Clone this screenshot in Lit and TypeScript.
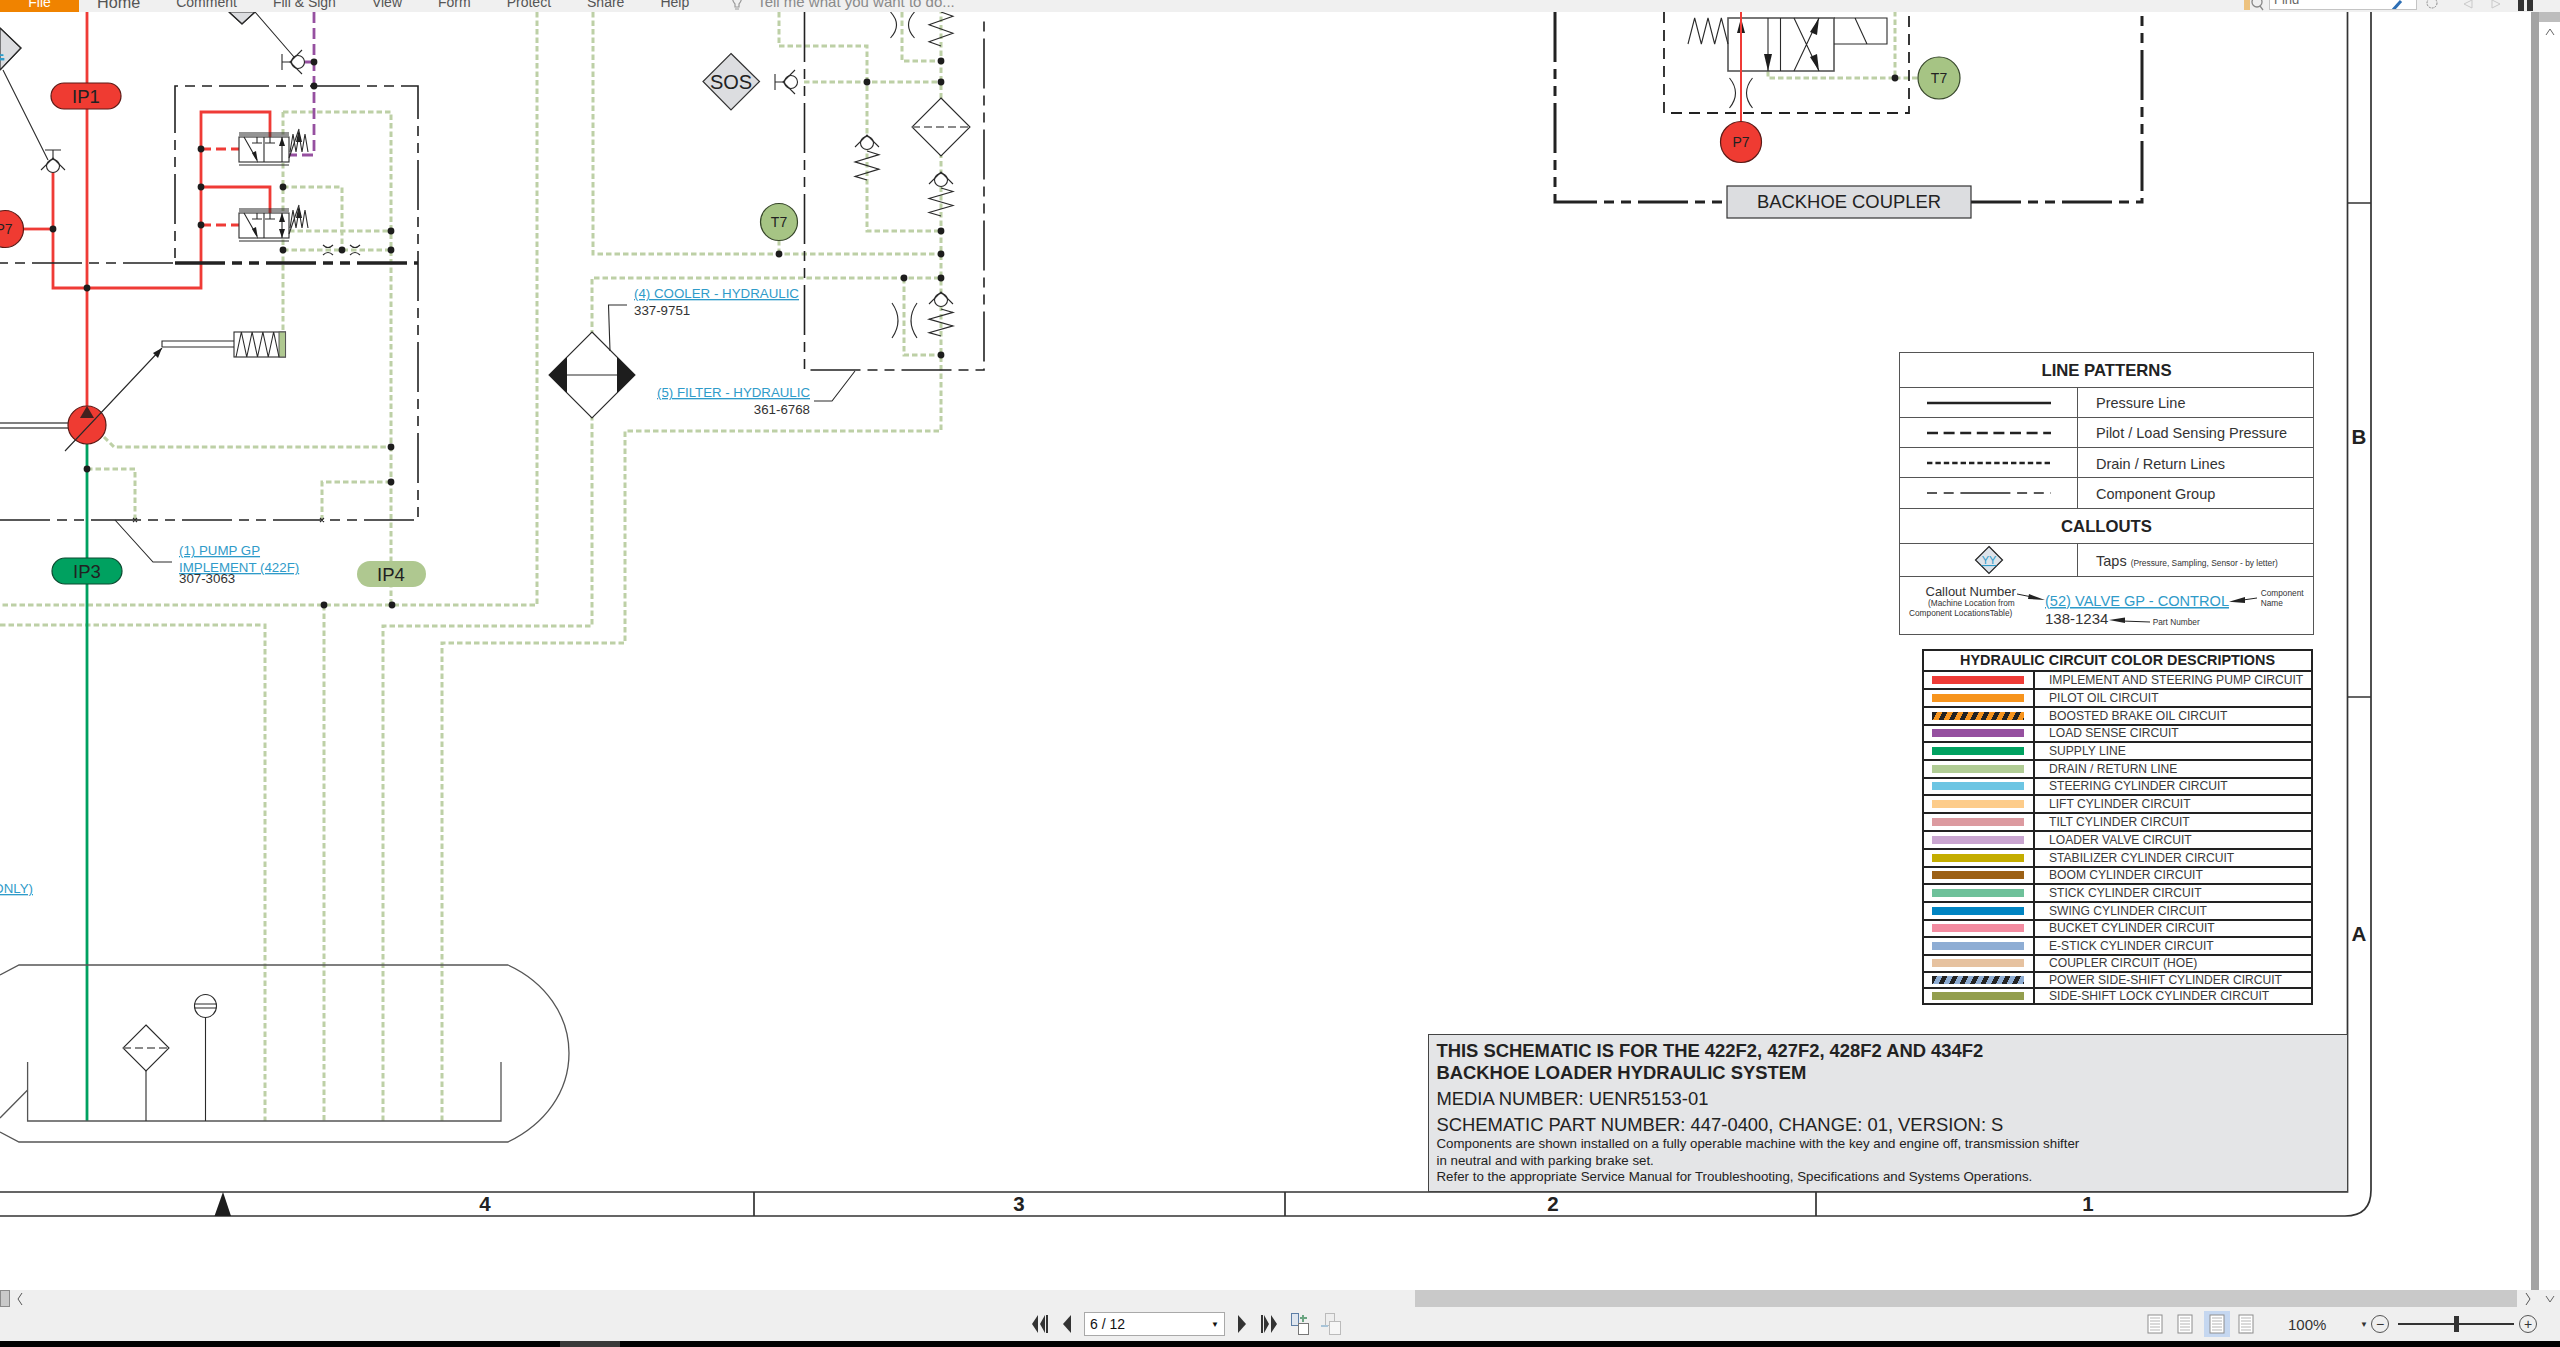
import { css, html, svg, LitElement } from "lit";
import { customElement } from "lit/decorators.js";

type Pt = [number, number];

const pts = (p: Pt[]) => p.map((q) => q.join(",")).join(" ");

// return lines, all in page coordinates
const DRAINS: Pt[][] = [
    [[283, 112], [391, 112], [391, 605]],
    [[283, 112], [283, 332]],
    [[283, 187], [342, 187], [342, 250]],
    [[289, 231], [391, 231]],
    [[283, 250], [391, 250]],
    [[537, 12], [537, 605], [0, 605]],
    [[593, 12], [593, 254], [941, 254]],
    [[383, 1121], [383, 626], [592, 626], [592, 278], [941, 278]],
    [[0, 625], [265, 625], [265, 1121]],
    [[324, 605], [324, 1121]],
    [[442, 1121], [442, 643], [625, 643], [625, 431], [941, 431], [941, 12]],
    [[779, 12], [779, 46], [867, 46], [867, 231], [941, 231]],
    [[779, 240], [779, 254]],
    [[804, 82], [941, 82]],
    [[902, 12], [902, 61], [941, 61]],
    [[904, 278], [904, 355], [941, 355]],
    [[87, 469], [135, 469], [135, 520]],
    [[391, 482], [322, 482], [322, 520]],
    [[104, 437], [114, 447], [391, 447]],
    [[1768, 71], [1768, 78], [1895, 78], [1895, 12]],
    [[1895, 78], [1918, 78]],
];

const DOTS: Pt[] = [
    [314, 62], [314, 86], [53, 229], [87, 288], [201, 149], [201, 187], [201, 225],
    [283, 187], [283, 250], [391, 231], [391, 250], [342, 250], [391, 447], [391, 482],
    [87, 469], [324, 605], [392, 605], [779, 254], [867, 82], [941, 82], [941, 61],
    [941, 231], [941, 254], [941, 278], [941, 355], [904, 278], [1895, 78],
];

const spring = (x: number, y0: number, y1: number, w: number, n: number) => {
    const step = (y1 - y0) / n;
    const p: Pt[] = [[x, y0]];
    for (let i = 0; i < n; i++) p.push([i % 2 ? x - w : x + w, y0 + step * (i + 0.5)]);
    p.push([x, y1]);
    return svg`<polyline class="thin" points=${pts(p)} />`;
};

const hspring = (x0: number, x1: number, y0: number, y1: number, n: number) => {
    const step = (x1 - x0) / n;
    const p: Pt[] = [];
    for (let i = 0; i <= n; i++) p.push([x0 + step * i, i % 2 ? y0 : y1]);
    return svg`<polyline class="thin" points=${pts(p)} />`;
};

const check = (x: number, y: number, rot: number, capped: boolean) => svg`
    <g transform="translate(${x} ${y}) rotate(${rot})">
        <circle class="thin blank" r="6.5" />
        <polyline class="thin" points="-12,4 0,-8 12,4" />
        ${capped ? svg`<path class="thin" d="M0 -8V-16M-8 -16H8" />` : ""}
    </g>
`;

const valve = (y: number) => svg`
    <g transform="translate(0 ${y})">
        <path class="thin" d="M239 133H289M239 135H289M239 165H289" />
        <rect class="thin blank" x="239" y="137" width="50" height="25" />
        <path class="thin" d="M264 137V162M257 137V143M252 143H262M270 137V143M265 143H275M282 137V162M244 137L257 160" />
        <polygon class="ink" points="258,163 252,153 256,151" />
        <polygon class="ink" points="282,137 279,146 285,146" />
        ${y ? svg`<polygon class="ink" points="282,162 279,153 285,153" />` : ""}
        <polygon class="ink" points="299,129 296,142 302,142" />
        <path class="thin" d="M289 158L299 129" />
        ${hspring(290, 308, 134, 152, 6)}
    </g>
`;

const orifice = (x: number, y0: number, y1: number, gap: number) => svg`
    <path class="thin" d="M${x - gap - 6} ${y0}Q${x - gap + 6} ${(y0 + y1) / 2} ${x - gap - 6} ${y1}" />
    <path class="thin" d="M${x + gap + 6} ${y0}Q${x + gap - 6} ${(y0 + y1) / 2} ${x + gap + 6} ${y1}" />
`;

const BAR = (pts0: Pt, t: string, cls: string) => svg`<text class=${cls} x=${pts0[0]} y=${pts0[1]}>${t}</text>`;

const schematic = () => svg`
    <svg class="drawing" viewBox="0 12 2531 1278" width="2531" height="1278">
        <path class="frame" d="M0 1192H2347.5V12M2371 12V1190Q2371 1216 2345 1216H0M2347 203H2371M2347 697H2371M754 1192V1216M1285 1192V1216M1816 1192V1216" />
        <polygon class="ink" points="223,1192 214.5,1216 231,1216" />
        ${BAR([485, 1211], "4", "sheet-no")}
        ${BAR([1019, 1211], "3", "sheet-no")}
        ${BAR([1553, 1211], "2", "sheet-no")}
        ${BAR([2088, 1211], "1", "sheet-no")}
        ${BAR([2359, 444], "B", "sheet-no")}
        ${BAR([2359, 941], "A", "sheet-no")}

        ${DRAINS.map((d) => svg`<polyline class="drain" points=${pts(d)} />`)}

        <path class="red" d="M87 12V406M53 172V288H201V112H270V137M201 187H270V213" />
        <path class="red" d="M23 229H53" />
        <path class="red dashed" d="M201 149H239M201 225H239" />
        <path class="purple" d="M314 12V155H289M304 62H314" />
        <path class="green" d="M87 444V1121" />

        <path class="group" d="M0 520H418V86H175V263H0" />
        <path class="group heavy" d="M175 263H418" />
        <path class="group" d="M804.5 12V370H984V17" />
        <path class="group coupler" d="M1555 12V202H1727M1971 202H2142V12" />
        <path class="group inner" d="M1664 12V113H1909V12" />

        <polygon class="sand" points="229,12 242,24 255,12" />
        <path class="thin" d="M229 12L242 24L255 12L294 57" />
        <polygon class="sand" points="0,28 21,48 0,70" />
        <path class="thin" d="M0 28L21 48L0 70M3 70L48 160" />
        ${BAR([-9, 56], "1", "link big")}

        ${check(53, 166, 0, true)}
        ${check(298, 62, -90, true)}
        ${check(791, 82, -90, true)}

        ${valve(0)}
        ${valve(76)}
        <path class="thin" d="M323 245Q328 250 333 245M323 255Q328 250 333 255M350 245Q355 250 360 245M350 255Q355 250 360 255" />

        <rect class="pill-red" x="51" y="83" width="70" height="26" rx="13" />
        ${BAR([86, 103], "IP1", "tag")}
        <circle class="pill-red" cx="5" cy="229" r="18.5" />
        ${BAR([4, 234], "P7", "tag small")}

        <path class="pipe" d="M0 423H68M0 428H68" />
        <circle class="pill-red" cx="87" cy="425" r="19" />
        <polygon class="plum" points="87,406 80,418 94,418" />
        <path class="thin" d="M65 451L162 348M162 347V341H234M162 347H234" />
        <polygon class="ink" points="162,348 153,353 158,358" />
        <rect class="thin" x="234" y="332" width="51.5" height="25" />
        <rect class="end-green" x="279" y="332" width="6.5" height="25" />
        ${hspring(236, 279, 332, 357, 8)}

        <path class="thin" d="M133 518L137 522M137 518L133 522M320 518L324 522M324 518L320 522" />
        <path class="thin" d="M115 520L153 562H172" />
        <rect class="pill-green" x="52" y="558" width="70" height="26" rx="13" />
        ${BAR([87, 578], "IP3", "tag")}
        <rect class="pill-drain" x="357" y="561" width="69" height="26" rx="13" />
        ${BAR([391, 581], "IP4", "tag")}

        ${BAR([179, 555], "(1) PUMP GP", "link")}
        ${BAR([179, 572], "IMPLEMENT (422F)", "link")}
        ${BAR([179, 583], "307-3063", "part")}
        ${BAR([33, 893], "(ONLY)", "link flush-end")}

        <polygon class="sand" points="731,53.5 759.5,81.5 731,110 703,81.5" />
        ${BAR([731, 89], "SOS", "tag sos")}
        <circle class="pill-drain stroked" cx="779" cy="222" r="18.5" />
        ${BAR([779, 227], "T7", "tag small")}

        <polygon class="thin blank" points="941,98 970,127 941,156 912,127" />
        <path class="thin dashline" d="M912 127H970" />
        ${check(867, 143, 0, false)}
        ${spring(867, 151, 180, 12, 4)}
        ${check(941, 180, 0, false)}
        ${spring(941, 188, 216, 12, 4)}
        ${check(941, 300, 0, false)}
        ${spring(941, 309, 336, 12, 4)}
        ${spring(941, 12, 46, 12, 4)}
        ${orifice(902.5, 12, 38, 6)}
        ${orifice(904.5, 303, 338, 6.5)}

        <polygon class="thin blank" points="592,332 635,375 592,418 549,375" />
        <polygon class="ink" points="549,375 567,357 567,393" />
        <polygon class="ink" points="635,375 617,357 617,393" />
        <path class="thin" d="M567 375H617M627 305H608.5L610 351" />
        <text class="link" x="634" y="298" textLength="165" lengthAdjust="spacingAndGlyphs">(4) COOLER - HYDRAULIC</text>
        ${BAR([634, 315], "337-9751", "part")}
        <text class="link" x="657" y="397" textLength="153" lengthAdjust="spacingAndGlyphs">(5) FILTER - HYDRAULIC</text>
        ${BAR([810, 414], "361-6768", "part flush-end")}
        <path class="thin" d="M814 401H832L855 371" />

        <path class="tank" d="M0 975L19 965H508C545 982 569 1015 569 1053C569 1092 545 1124 508 1142H19L0 1132M27.6 1062V1121H501V1062M27.6 1090L0 1118" />
        <polygon class="thin" points="146,1025 169,1048 146,1071 123,1048" />
        <path class="thin dashline" d="M123 1048H169" />
        <path class="thin" d="M146 1071V1121M205.5 1017.5V1121M194.5 1004H216.5M194.5 1008H216.5" />
        <ellipse class="thin" cx="205.5" cy="1006" rx="11" ry="11.5" />

        <rect class="sand" x="1727" y="186" width="244" height="32" />
        ${BAR([1849, 208], "BACKHOE COUPLER", "tag coupler-name")}
        <rect class="thin heavy-edge" x="1728" y="18" width="106" height="53" />
        <path class="thin" d="M1780.5 18V71M1834 18H1887V44H1834M1855 18L1867 44M1768 18V71M1794 71L1819 18M1794 18L1819 71" />
        ${hspring(1688, 1728, 18, 44, 6)}
        <polygon class="ink" points="1741,18 1737,33 1745,33" />
        <polygon class="ink" points="1768,71 1764,54 1772,54" />
        <polygon class="ink" points="1819,18 1810,32 1817,35" />
        <polygon class="ink" points="1819,71 1810,57 1817,54" />
        <path class="red narrow" d="M1741 12V121" />
        ${orifice(1741, 78, 108, 5.5)}
        <circle class="pill-red" cx="1741" cy="142" r="20.5" />
        ${BAR([1741, 147], "P7", "tag small")}
        <circle class="pill-drain stroked" cx="1939" cy="78" r="21" />
        ${BAR([1939, 83], "T7", "tag small")}

        ${DOTS.map((d) => svg`<circle class="dot" cx=${d[0]} cy=${d[1]} r="3.4" />`)}
    </svg>
`;

interface Circuit {
    label: string;
    color: string;
    hatch?: boolean;
    h: number;
}

const CIRCUITS: Circuit[] = [
    { label: "IMPLEMENT AND STEERING PUMP CIRCUIT", color: "#ef3b36", h: 17.7 },
    { label: "PILOT OIL CIRCUIT", color: "#f7941d", h: 18 },
    { label: "BOOSTED BRAKE OIL CIRCUIT", color: "#f7941d", hatch: true, h: 18 },
    { label: "LOAD SENSE CIRCUIT", color: "#9650a0", h: 17.3 },
    { label: "SUPPLY LINE", color: "#00a160", h: 18 },
    { label: "DRAIN / RETURN LINE", color: "#b0cc94", h: 18 },
    { label: "STEERING CYLINDER CIRCUIT", color: "#6cc5e3", h: 16.7 },
    { label: "LIFT CYLINDER CIRCUIT", color: "#fdcc8a", h: 18 },
    { label: "TILT CYLINDER CIRCUIT", color: "#dc9aa0", h: 18 },
    { label: "LOADER VALVE CIRCUIT", color: "#c9a5d0", h: 18 },
    { label: "STABILIZER CYLINDER CIRCUIT", color: "#c4ad00", h: 18 },
    { label: "BOOM CYLINDER CIRCUIT", color: "#9c6015", h: 17.3 },
    { label: "STICK CYLINDER CIRCUIT", color: "#6ec19a", h: 18 },
    { label: "SWING CYLINDER CIRCUIT", color: "#0084c2", h: 18 },
    { label: "BUCKET CYLINDER CIRCUIT", color: "#f38ba0", h: 16.7 },
    { label: "E-STICK CYLINDER CIRCUIT", color: "#8eadd4", h: 18 },
    { label: "COUPLER CIRCUIT (HOE)", color: "#e6c2a0", h: 17.3 },
    { label: "POWER SIDE-SHIFT CYLINDER CIRCUIT", color: "#8eadd4", hatch: true, h: 15.7 },
    { label: "SIDE-SHIFT LOCK CYLINDER CIRCUIT", color: "#939e4e", h: 16 },
];

const SAMPLES = [
    ["solid", "Pressure Line"],
    ["pilot", "Pilot / Load Sensing Pressure"],
    ["dotted", "Drain / Return Lines"],
    ["comp", "Component Group"],
];

const TABS = ["Home", "Comment", "Fill & Sign", "View", "Form", "Protect", "Share", "Help"];

const pageIcon = (lines: number) => svg`
    <svg class="page-ico" viewBox="0 0 16 20" width="16" height="20">
        <rect x="1" y="1" width="14" height="18" fill="#fff" stroke="#8d8d8d" />
        ${Array.from({ length: lines }, (_, i) => svg`<path d="M3 ${4 + i * 3}H13" stroke="#b5b5b5" />`)}
    </svg>
`;

@customElement("app-root")
export class AppRoot extends LitElement {
    static styles = css`
        :host {
            display: flex;
            flex-direction: column;
            height: 1347px;
            width: 2560px;
            overflow: hidden;
            background: #fff;
            font-family: "Liberation Sans", Arial, sans-serif;
            color: #222;
        }

        .ribbon {
            height: 12px;
            flex: none;
            display: flex;
            overflow: hidden;
            background: #f0f0f0;
            font-size: 14px;
            line-height: 20px;
            color: #555;
        }
        .file {
            width: 79px;
            height: 12px;
            flex: none;
            background: #f08300;
            color: #fff;
            text-align: center;
        }
        .file span,
        .tabs {
            display: block;
            margin-top: -8px;
        }
        .tabs {
            display: flex;
            gap: 36px;
            margin-left: 18px;
            white-space: nowrap;
        }
        .tabs > span:first-child {
            font-size: 16.2px;
        }
        .tabs .tell {
            display: flex;
            gap: 12px;
            color: #8a8a8a;
            margin-left: 4px;
            font-size: 15px;
        }
        .tools {
            margin-left: auto;
            display: flex;
            align-items: flex-start;
            height: 12px;
            margin-right: 14px;
        }
        .find {
            width: 148px;
            height: 10px;
            margin: 0 9px 0 1px;
            display: flex;
            justify-content: space-between;
            align-items: flex-start;
            background: #fff;
            border: 1px solid #c4c4c4;
            border-top: none;
            overflow: hidden;
            font-size: 13px;
            line-height: 12px;
            padding: 0 12px 0 4px;
            box-sizing: border-box;
            color: #666;
        }
        .find span {
            display: block;
            margin-top: -6px;
        }

        .main {
            flex: 1;
            display: flex;
            min-height: 0;
        }
        .sheet {
            position: relative;
            width: 2531px;
            flex: none;
            overflow: hidden;
            background: #fff;
        }
        .vthumb {
            width: 8px;
            flex: none;
            background: #a4a4a4;
        }
        .vrail {
            flex: 1;
            display: flex;
            flex-direction: column;
            align-items: center;
            gap: 6px;
        }
        .vrail i {
            display: block;
            width: 100%;
            height: 10px;
            background: #bdbdbd;
        }

        .drawing {
            display: block;
        }
        .drawing text {
            font-family: "Liberation Sans", Arial, sans-serif;
        }
        .drawing polyline,
        .drawing path {
            fill: none;
        }
        .drain {
            stroke: #bdd0a6;
            stroke-width: 3;
            stroke-dasharray: 5.5 3;
        }
        .thin {
            fill: none;
            stroke: #2a2a2a;
            stroke-width: 1.1;
        }
        .blank {
            fill: #fff;
        }
        .dashline {
            stroke: #666;
            stroke-width: 1.5;
            stroke-dasharray: 8 4;
        }
        .ink {
            fill: #1d1d1d;
        }
        .plum {
            fill: #43211f;
        }
        .dot {
            fill: #1d1d1d;
        }
        .frame {
            stroke: #333;
            stroke-width: 1.7;
        }
        .red {
            stroke: #ef3b36;
            stroke-width: 2.8;
        }
        .red.dashed {
            stroke-dasharray: 10 5;
        }
        .red.narrow {
            stroke-width: 2;
        }
        .purple {
            stroke: #9650a0;
            stroke-width: 2.8;
            stroke-dasharray: 11 5;
        }
        .green {
            stroke: #00a160;
            stroke-width: 2.8;
        }
        .group {
            stroke: #222;
            stroke-width: 1.6;
            stroke-dasharray: 50 7 10 7 10 7;
        }
        .group.heavy {
            stroke-width: 3.4;
        }
        .group.coupler {
            stroke-width: 3;
        }
        .group.inner {
            stroke-width: 1.8;
            stroke-dasharray: 11 7;
        }
        .pipe,
        .tank {
            stroke: #555;
            stroke-width: 1.3;
        }
        .sand {
            fill: #dcdde0;
            stroke: #333;
            stroke-width: 1.2;
        }
        .heavy-edge {
            stroke: #555;
            stroke-width: 1.6;
        }
        .pill-red {
            fill: #ef3b32;
            stroke: #5b1a16;
            stroke-width: 1.2;
        }
        .pill-green {
            fill: #00a160;
            stroke: #0d4a30;
            stroke-width: 1.2;
        }
        .pill-drain {
            fill: #afc890;
        }
        .pill-drain.stroked {
            fill: #a6c484;
            stroke: #37472a;
            stroke-width: 1.2;
        }
        .end-green {
            fill: #afc890;
            stroke: #555;
            stroke-width: 1;
        }
        .tag {
            font-size: 18.5px;
            text-anchor: middle;
            fill: #222;
        }
        .tag.small {
            font-size: 14px;
        }
        .tag.sos {
            font-size: 20px;
        }
        .tag.coupler-name {
            font-size: 18.4px;
        }
        .sheet-no {
            font-size: 20.5px;
            font-weight: 700;
            text-anchor: middle;
            fill: #222;
        }
        .link {
            font-size: 13.3px;
            fill: #2f9bc9;
            text-decoration: underline;
        }
        .link.big {
            font-size: 24px;
        }
        .part {
            font-size: 13.3px;
            fill: #333;
        }
        .flush-end {
            text-anchor: end;
        }

        .patterns {
            position: absolute;
            left: 1899px;
            top: 340px;
            width: 415px;
            height: 283px;
            box-sizing: border-box;
            display: grid;
            grid-template-columns: 178px 1fr;
            grid-template-rows: 35px 30px 30px 30px 31px 35px 33px 1fr;
            border: 1.5px solid #555;
            font-size: 14.5px;
            color: #333;
        }
        .patterns > div {
            display: flex;
            align-items: center;
            border-bottom: 1px solid #555;
        }
        .patterns > div:last-child {
            border-bottom: none;
        }
        .heading {
            grid-column: 1 / span 2;
            justify-content: center;
            padding-top: 2px;
            font-weight: 700;
            font-size: 16.7px;
            color: #222;
        }
        .sample {
            justify-content: center;
            border-right: 1px solid #555;
        }
        .label {
            padding-left: 18px;
        }
        .label.low {
            padding-top: 2px;
        }
        .label small {
            font-size: 8.4px;
            margin-left: 4px;
            margin-top: 3px;
        }
        .wide {
            grid-column: 1 / span 2;
        }
        .sample svg {
            display: block;
        }
        .sample line {
            stroke: #222;
        }
        .solid {
            stroke-width: 2.6;
        }
        .pilot {
            stroke-width: 2.6;
            stroke-dasharray: 11 5.6;
        }
        .dotted {
            stroke-width: 2.6;
            stroke-dasharray: 5.4 3;
        }
        .comp {
            stroke-width: 1.5;
            stroke-dasharray: 10 6.7 10 6.7 50 6.7 10 6.7 10 6.7 1;
        }
        .callout text {
            font-family: "Liberation Sans", Arial, sans-serif;
            fill: #333;
        }
        .callout .c-big {
            font-size: 13px;
        }
        .callout .c-tiny {
            font-size: 8.3px;
        }
        .callout .c-name {
            font-size: 15.4px;
            fill: #2f9bc9;
            text-decoration: underline;
        }
        .callout .c-part {
            font-size: 15px;
        }
        .tap-text {
            font-size: 11px;
            fill: #2f9bc9;
            text-anchor: middle;
            text-decoration: underline;
            font-family: "Liberation Sans", Arial, sans-serif;
        }

        .circuits {
            position: absolute;
            left: 1922px;
            top: 637px;
            width: 391px;
            box-sizing: border-box;
            border: 2px solid #222;
            display: flex;
            flex-direction: column;
            font-size: 12.1px;
            color: #3a3a3a;
        }
        .circuits h4 {
            margin: 0;
            height: 19px;
            line-height: 19px;
            text-align: center;
            font-size: 14.4px;
            color: #222;
        }
        .circuit {
            display: grid;
            grid-template-columns: 111px 1fr;
            border-top: 2px solid #222;
            box-sizing: border-box;
            align-items: stretch;
            line-height: 14px;
        }
        .swatch-cell {
            display: flex;
            align-items: center;
            padding-left: 8px;
            border-right: 2px solid #222;
        }
        .swatch {
            display: block;
            width: 92px;
            height: 8px;
        }
        .swatch.hatch {
            background-image: repeating-linear-gradient(115deg, #222 0 4.5px, transparent 4.5px 9.5px);
        }
        .circuit-name {
            padding-left: 14px;
            white-space: nowrap;
            align-self: center;
        }

        .title-block {
            position: absolute;
            left: 1428px;
            top: 1022px;
            width: 920px;
            height: 158px;
            box-sizing: border-box;
            border: 1.5px solid #444;
            background: #e4e5e7;
            padding: 5px 0 0 7.5px;
            white-space: nowrap;
            color: #222;
        }
        .t-bold {
            font-weight: 700;
            font-size: 18.4px;
            line-height: 22px;
        }
        .t-mid {
            font-size: 18.4px;
            line-height: 26px;
        }
        .t-mid.first {
            margin-top: 2px;
        }
        .t-small {
            font-size: 13.3px;
            line-height: 16.5px;
        }
        .t-small.first {
            margin-top: -2px;
        }

        .hscroll {
            height: 17px;
            flex: none;
            display: flex;
            align-items: center;
            background: #efefef;
        }
        .hscroll .stub {
            width: 10px;
            height: 17px;
            box-sizing: border-box;
            background: #c9c9c9;
            border: 1px solid #8a8a8a;
        }
        .hscroll .left {
            margin-left: 7px;
        }
        .hscroll .bar {
            width: 1102px;
            height: 17px;
            margin-left: 1392px;
            background: #c9c9c9;
        }
        .hscroll .right {
            margin-left: 8px;
        }
        .hscroll .down {
            margin-left: 14px;
        }

        .status {
            height: 34px;
            flex: none;
            display: flex;
            align-items: center;
            background: #efefef;
            font-size: 14px;
            color: #333;
        }
        .pager {
            display: flex;
            align-items: center;
            gap: 12px;
            margin-left: 1030px;
        }
        .page-box {
            width: 141px;
            height: 24px;
            box-sizing: border-box;
            display: flex;
            align-items: center;
            justify-content: space-between;
            padding: 0 5px;
            background: #fff;
            border: 1px solid #a9a9a9;
            color: #111;
        }
        .caret {
            font-size: 8px;
        }
        .views {
            display: flex;
            align-items: center;
            margin-left: 806px;
        }
        .views .active {
            display: flex;
            justify-content: center;
            align-items: center;
            width: 26px;
            height: 26px;
            margin: 0 8px 0 11px;
            background: #c5d7f0;
        }
        .views .second {
            margin-left: 14px;
            display: flex;
        }
        .percent {
            margin: 0 34px;
            font-size: 15px;
            width: 38px;
            white-space: nowrap;
        }
        .zoom-caret {
            width: 11px;
            font-size: 8px;
        }
        .zoom-btn {
            width: 18px;
            height: 18px;
            box-sizing: border-box;
            border: 1px solid #555;
            border-radius: 50%;
            display: flex;
            align-items: center;
            justify-content: center;
            font-size: 14px;
            line-height: 1;
        }
        .slider {
            width: 116px;
            height: 16px;
            margin: 0 5px 0 9px;
            display: flex;
            justify-content: center;
            align-items: center;
            background: linear-gradient(#333, #333) center / 100% 2px no-repeat;
        }
        .slider i {
            display: block;
            width: 5px;
            height: 16px;
            background: #333;
        }
        .taskbar {
            height: 6px;
            flex: none;
            background: #000;
        }
        .taskbar i {
            display: block;
            width: 60px;
            height: 6px;
            margin-left: 560px;
            background: #3a3a3a;
        }
    `;

    renderRibbon() {
        return html`
            <div class="ribbon">
                <div class="file"><span>File</span></div>
                <div class="tabs">
                    ${TABS.map((t) => html`<span>${t}</span>`)}
                    <span class="tell">
                        <svg viewBox="0 0 16 16" width="16" height="20">
                            <path d="M3 0Q3 7 6 10V13H10V10Q13 7 13 0M6 15H10" stroke="#9a9a9a" stroke-width="1.2" fill="none" />
                        </svg>
                        <span>Tell me what you want to do...</span>
                    </span>
                </div>
                <div class="tools">
                    <svg viewBox="0 0 24 12" width="24" height="12">
                        <rect x="0" y="0" width="6" height="10" fill="#edc27f" />
                        <circle cx="13" cy="2" r="5" stroke="#888" stroke-width="1.3" fill="none" />
                        <path d="M16 6L19 10" stroke="#888" stroke-width="1.3" />
                    </svg>
                    <div class="find">
                        <span>Find</span>
                        <svg viewBox="0 0 12 10" width="12" height="10">
                            <path d="M1 10L9 1" stroke="#2d6fb5" stroke-width="3" />
                        </svg>
                    </div>
                    <svg viewBox="0 0 120 12" width="120" height="12">
                        <circle cx="6" cy="3" r="5" stroke="#8a8a8a" fill="none" stroke-dasharray="2 1" />
                        <path d="M46 0L38 4L46 8ZM66 0L74 4L66 8Z" stroke="#c9c9c9" fill="none" />
                        <path d="M92 0H98V11H92ZM101 0H107V11H101Z" fill="#333" />
                    </svg>
                </div>
            </div>
        `;
    }

    renderPatterns() {
        return html`
            <div class="patterns">
                <div class="heading">LINE PATTERNS</div>
                ${SAMPLES.map(
                    ([cls, label], i) => html`
                    <div class="sample">
                        <svg width="124" height="4" viewBox="0 0 124 4">
                            <line class=${cls} x1="0" y1="2" x2="124" y2="2"></line>
                        </svg>
                    </div>
                    <div class="label ${i > 1 ? "low" : ""}">${label}</div>
                `,
                )}
                <div class="heading">CALLOUTS</div>
                <div class="sample">
                    <svg width="30" height="30" viewBox="-15 -15 30 30">
                        <polygon points="0,-13.5 13.5,0 0,13.5 -13.5,0" fill="#dde3ea" stroke="#222" stroke-width="1.2"></polygon>
                        <text class="tap-text" y="4">YY</text>
                    </svg>
                </div>
                <div class="label low">Taps<small>(Pressure, Sampling, Sensor - by letter)</small></div>
                <div class="wide">
                    <svg class="callout" width="412" height="57" viewBox="1900 577 412 57">
                        <text class="c-big" x="1925.5" y="595.7">Callout Number</text>
                        <text class="c-tiny" x="1928" y="605.7">(Machine Location from</text>
                        <text class="c-tiny" x="1909" y="616">Component LocationsTable)</text>
                        <text class="c-name" x="2045" y="606" textLength="184" lengthAdjust="spacingAndGlyphs">(52) VALVE GP - CONTROL</text>
                        <text class="c-part" x="2045" y="624">138-1234</text>
                        <text class="c-tiny" x="2260.7" y="596">Component</text>
                        <text class="c-tiny" x="2260.7" y="606">Name</text>
                        <text class="c-tiny" x="2152.7" y="625">Part Number</text>
                        <path d="M2017 594L2032 597M2257 598L2243 600M2150 622L2122 621" stroke="#222"></path>
                        <polygon points="2045,600 2029,594 2028,599" fill="#222"></polygon>
                        <polygon points="2229,601.7 2245,597 2245,603" fill="#222"></polygon>
                        <polygon points="2109,620 2125,617.5 2125,623" fill="#222"></polygon>
                    </svg>
                </div>
            </div>
        `;
    }

    renderCircuits() {
        return html`
            <div class="circuits">
                <h4>HYDRAULIC CIRCUIT COLOR DESCRIPTIONS</h4>
                ${CIRCUITS.map(
                    (c) => html`
                    <div class="circuit" style="height:${c.h}px">
                        <div class="swatch-cell">
                            <span class="swatch ${c.hatch ? "hatch" : ""}" style="background-color:${c.color}"></span>
                        </div>
                        <span class="circuit-name">${c.label}</span>
                    </div>
                `,
                )}
            </div>
        `;
    }

    renderTitle() {
        return html`
            <div class="title-block">
                <div class="t-bold">THIS SCHEMATIC IS FOR THE 422F2, 427F2, 428F2 AND 434F2</div>
                <div class="t-bold">BACKHOE LOADER HYDRAULIC SYSTEM</div>
                <div class="t-mid first">MEDIA NUMBER: UENR5153-01</div>
                <div class="t-mid">SCHEMATIC PART NUMBER: 447-0400, CHANGE: 01, VERSION: S</div>
                <div class="t-small first">Components are shown installed on a fully operable machine with the key and engine off, transmission shifter</div>
                <div class="t-small">in neutral and with parking brake set.</div>
                <div class="t-small">Refer to the appropriate Service Manual for Troubleshooting, Specifications and Systems Operations.</div>
            </div>
        `;
    }

    renderStatus() {
        return html`
            <div class="status">
                <div class="pager">
                    <svg viewBox="0 0 20 18" width="20" height="18"><path d="M8 0L2 9L8 18ZM15 0L10 9L15 18ZM16 0H18V18H16Z" fill="#333" /></svg>
                    <svg viewBox="0 0 10 18" width="10" height="18"><path d="M9 0L1 9L9 18Z" fill="#333" /></svg>
                    <div class="page-box"><span>6 / 12</span><span class="caret">▼</span></div>
                    <svg viewBox="0 0 10 18" width="10" height="18"><path d="M1 0L9 9L1 18Z" fill="#333" /></svg>
                    <svg viewBox="0 0 20 18" width="20" height="18"><path d="M12 0L18 9L12 18ZM5 0L10 9L5 18ZM2 0H4V18H2Z" fill="#333" /></svg>
                    <svg viewBox="0 0 18 22" width="18" height="22">
                        <rect x="0.5" y="0.5" width="7" height="12" fill="#dfe6ef" stroke="#5d7ea6" />
                        <path d="M9 5H16M12 2V9" stroke="#6aa581" stroke-width="2" />
                        <rect x="7.5" y="10.5" width="10" height="11" fill="#fff" stroke="#777" />
                    </svg>
                    <svg viewBox="0 0 20 22" width="20" height="22">
                        <rect x="4.5" y="0.5" width="9" height="12" fill="#eee" stroke="#bbb" />
                        <rect x="8.5" y="8.5" width="11" height="13" fill="#f6f6f6" stroke="#bbb" />
                        <path d="M0 13H7" stroke="#a8c4d8" stroke-width="2" />
                    </svg>
                </div>
                <div class="views">
                    ${pageIcon(5)}
                    <span class="second">${pageIcon(5)}</span>
                    <span class="active">${pageIcon(5)}</span>
                    ${pageIcon(6)}
                    <span class="percent">100%</span>
                    <span class="zoom-caret">▼</span>
                    <span class="zoom-btn">−</span>
                    <span class="slider"><i></i></span>
                    <span class="zoom-btn">+</span>
                </div>
            </div>
        `;
    }

    render() {
        return html`
            ${this.renderRibbon()}
            <div class="main">
                <div class="sheet">
                    ${schematic()}
                    ${this.renderPatterns()}
                    ${this.renderCircuits()}
                    ${this.renderTitle()}
                </div>
                <div class="vthumb"></div>
                <div class="vrail">
                    <i></i>
                    <svg viewBox="0 0 10 8" width="10" height="8"><path d="M1 7L5 1L9 7" stroke="#666" fill="none" /></svg>
                </div>
            </div>
            <div class="hscroll">
                <div class="stub"></div>
                <svg class="left" viewBox="0 0 6 14" width="6" height="14"><path d="M5 1L1 7L5 13" stroke="#555" fill="none" /></svg>
                <div class="bar"></div>
                <svg class="right" viewBox="0 0 6 14" width="6" height="14"><path d="M1 1L5 7L1 13" stroke="#555" fill="none" /></svg>
                <svg class="down" viewBox="0 0 10 8" width="10" height="8"><path d="M1 1L5 7L9 1" stroke="#666" fill="none" /></svg>
            </div>
            ${this.renderStatus()}
            <div class="taskbar"><i></i></div>
        `;
    }
}
